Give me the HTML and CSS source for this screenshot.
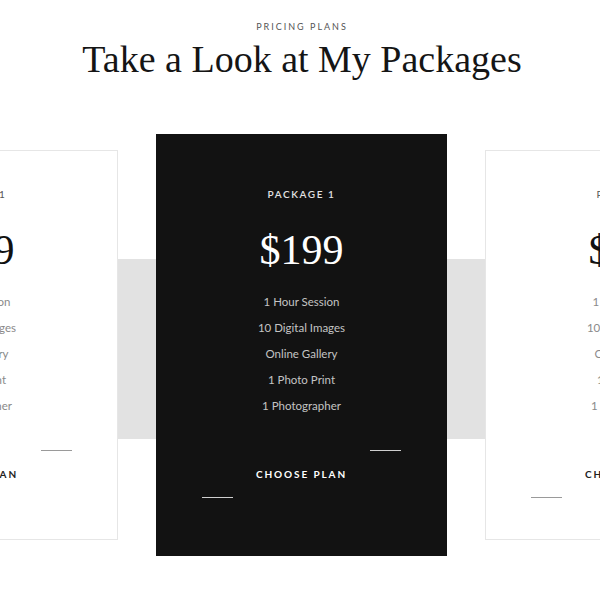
FILE: index.html
```html
<!DOCTYPE html>
<html>
<head>
<meta charset="utf-8">
<link rel="stylesheet" href="styles.css">
</head>
<body>
<section class="pricing">
  <header class="head">
    <p class="eyebrow">PRICING PLANS</p>
    <h1 class="title">Take a Look at My Packages</h1>
  </header>
  <div class="row">
    <div class="card side">
      <p class="label">PACKAGE 1</p>
      <p class="price">$199</p>
      <ul class="features">
        <li>1 Hour Session</li>
        <li>10 Digital Images</li>
        <li>Online Gallery</li>
        <li>1 Photo Print</li>
        <li>1 Photographer</li>
      </ul>
      <div class="btn"><span class="line top"></span><span class="btn-text">CHOOSE PLAN</span><span class="line bottom"></span></div>
    </div>
    <div class="card featured">
      <p class="label">PACKAGE 1</p>
      <p class="price">$199</p>
      <ul class="features">
        <li>1 Hour Session</li>
        <li>10 Digital Images</li>
        <li>Online Gallery</li>
        <li>1 Photo Print</li>
        <li>1 Photographer</li>
      </ul>
      <div class="btn"><span class="line top"></span><span class="btn-text">CHOOSE PLAN</span><span class="line bottom"></span></div>
    </div>
    <div class="card side">
      <p class="label">PACKAGE 1</p>
      <p class="price">$199</p>
      <ul class="features">
        <li>1 Hour Session</li>
        <li>10 Digital Images</li>
        <li>Online Gallery</li>
        <li>1 Photo Print</li>
        <li>1 Photographer</li>
      </ul>
      <div class="btn"><span class="line top"></span><span class="btn-text">CHOOSE PLAN</span><span class="line bottom"></span></div>
    </div>
  </div>
</section>
</body>
</html>
```

FILE: styles.css
```css
html, body {
  margin: 0;
  padding: 0;
  background: #fff;
  overflow: hidden;
  width: 600px;
  height: 600px;
}
.pricing {
  font-family: "Lato", "Open Sans", sans-serif;
}
.head {
  text-align: center;
  padding-top: 21px;
  padding-left: 4px;
}
.eyebrow {
  margin: 0;
  font-size: 9px;
  line-height: 12px;
  letter-spacing: 2px;
  color: #555;
}
.title {
  margin: 3px 0 0;
  font-family: "Liberation Serif", "DejaVu Serif", serif;
  font-weight: 400;
  font-size: 38px;
  line-height: 46px;
  color: #151515;
}
.row {
  margin-top: 52px;
  display: flex;
  justify-content: center;
  align-items: center;
  gap: 38px;
  padding-left: 3px;
  background: linear-gradient(to bottom, transparent 0, transparent 125px, #e2e2e2 125px, #e2e2e2 305px, transparent 305px);
}
.card {
  flex: 0 0 291px;
  width: 291px;
  box-sizing: border-box;
  text-align: center;
}
.featured {
  background: #121212;
  padding: 53px 0 58px;
}
.side {
  background: #fff;
  border: 1px solid #e6e6e6;
  padding: 36px 0 41px;
}
.label {
  margin: 0;
  font-size: 10px;
  line-height: 14px;
  letter-spacing: 1.6px;
  font-weight: 600;
}
.featured .label { color: #e2e2e2; }
.side .label { color: #555; font-weight: 400; }
.price {
  margin: 24px 0 0;
  font-family: "Liberation Serif", "DejaVu Serif", serif;
  font-size: 42px;
  line-height: 50px;
}
.featured .price { color: #fff; }
.side .price { color: #111; }
.features {
  list-style: none;
  margin: 14px 0 0;
  padding: 0;
  font-size: 11.5px;
  line-height: 26px;
}
.featured .features { color: #c4c4c4; }
.side .features { color: #8a8a8a; }
.btn {
  width: 199px;
  margin: 31px auto 0;
  display: flex;
  flex-direction: column;
}
.line {
  display: block;
  width: 31px;
  height: 1px;
}
.featured .line { background: #cfcfcf; }
.side .line { background: #9a9a9a; }
.line.top { align-self: flex-end; }
.line.bottom { align-self: flex-start; }
.btn-text {
  margin: 16px 0;
  font-size: 10px;
  line-height: 14px;
  font-weight: 700;
  letter-spacing: 1.9px;
}
.featured .btn-text { color: #fff; }
.side .btn-text { color: #222; }
```
